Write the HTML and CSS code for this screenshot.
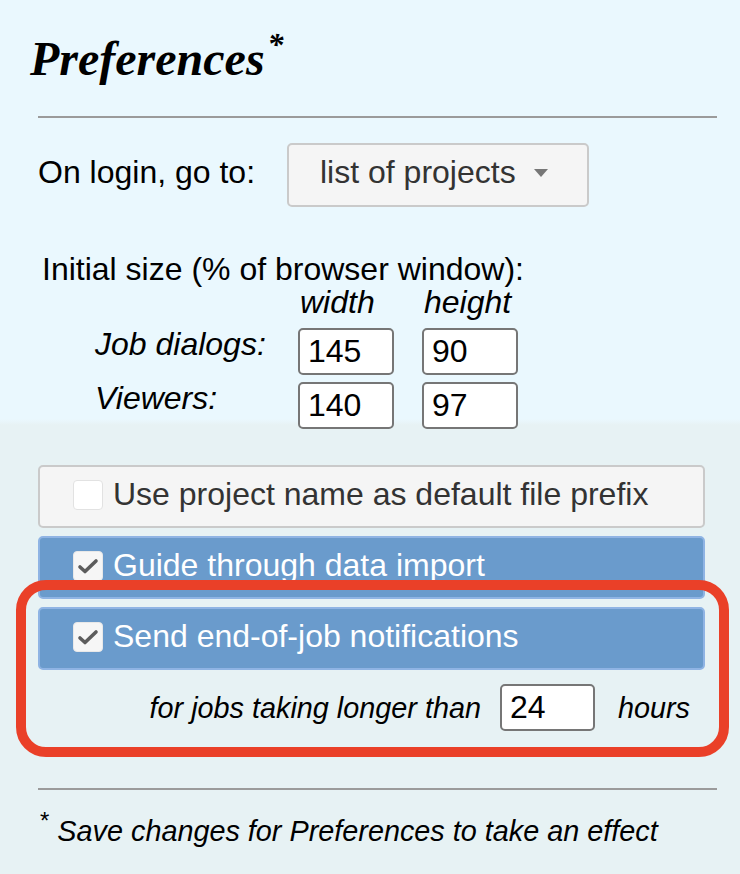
FILE: index.html
```html
<!DOCTYPE html>
<html lang="en">
<head>
<meta charset="utf-8">
<title>Preferences</title>
<link rel="stylesheet" href="styles.css">
</head>
<body>
<div class="page">
  <h1 class="title">Preferences<sup class="title-star">*</sup></h1>
  <hr class="rule">

  <div class="login-row">
    <span class="login-label">On login, go to:</span>
    <div class="select">list of projects<span class="caret"></span></div>
  </div>

  <div class="size-title">Initial size (% of browser window):</div>
  <div class="size-grid">
    <span></span>
    <span class="colhead">width</span>
    <span class="colhead">height</span>

    <span class="rowlabel">Job dialogs:</span>
    <span class="field">145</span>
    <span class="field">90</span>

    <span class="rowlabel">Viewers:</span>
    <span class="field">140</span>
    <span class="field">97</span>
  </div>

  <div class="opts">
    <div class="opt opt-off">
      <span class="box"></span>
      <span class="opt-text">Use project name as default file prefix</span>
    </div>
    <div class="opt opt-on">
      <span class="box"><svg viewBox="0 0 30 30" width="30" height="30"><path d="M7 16 L12 20.5 L23 10" fill="none" stroke="#5c5c5c" stroke-width="3.6" stroke-linecap="round" stroke-linejoin="round"/></svg></span>
      <span class="opt-text">Guide through data import</span>
    </div>
    <div class="highlight">
      <div class="opt opt-on">
        <span class="box"><svg viewBox="0 0 30 30" width="30" height="30"><path d="M7 16 L12 20.5 L23 10" fill="none" stroke="#5c5c5c" stroke-width="3.6" stroke-linecap="round" stroke-linejoin="round"/></svg></span>
        <span class="opt-text">Send end-of-job notifications</span>
      </div>
      <div class="notify-row">
        <span class="notify-label">for jobs taking longer than</span>
        <span class="field field-hours">24</span>
        <span class="notify-unit">hours</span>
      </div>
    </div>
  </div>

  <hr class="rule rule-bottom">
  <p class="note"><sup class="note-star">*</sup> Save changes for Preferences to take an effect</p>
</div>
</body>
</html>
```

FILE: styles.css
```css
html, body {
  margin: 0;
  padding: 0;
}

body {
  width: 740px;
  min-height: 874px;
  background: linear-gradient(to bottom, #eaf8fe 0, #eaf8fe 419px, #e7f2f4 425px, #e7f2f4 100%);
  font-family: "Liberation Sans", Arial, sans-serif;
  font-size: 32px;
  color: #000;
}

.page {
  padding: 0 23px 0 38px;
  overflow: hidden;
}

.title {
  margin: 31px 0 0 -8px;
  font-family: "Liberation Serif", "Times New Roman", serif;
  font-weight: bold;
  font-style: italic;
  font-size: 48px;
  line-height: 56px;
}

.title-star {
  font-size: 32px;
  line-height: 0;
  vertical-align: 20px;
  margin-left: 3px;
}

.rule {
  margin: 29px 0 0;
  border: 0;
  border-top: 2px solid #9b9b9b;
  height: 0;
}

.login-row {
  display: flex;
  align-items: baseline;
  margin-top: 25px;
}

.login-label {
  flex: none;
  width: 249px;
  line-height: 37px;
}

.select {
  box-sizing: border-box;
  width: 302px;
  height: 64px;
  padding: 7px 0 13px 31px;
  line-height: 40px;
  background: #f5f5f5;
  border: 2px solid #cacaca;
  border-radius: 5px;
  color: #333;
}

.caret {
  display: inline-block;
  width: 0;
  height: 0;
  margin-left: 18px;
  border-left: 7px solid transparent;
  border-right: 7px solid transparent;
  border-top: 8px solid #777;
  vertical-align: 6px;
}

.size-title {
  margin-top: 47px;
  padding-left: 4px;
  line-height: 31px;
}

.size-grid {
  display: grid;
  grid-template-columns: 175px 96px 96px;
  column-gap: 28px;
  row-gap: 7px;
  margin-left: 57px;
}

.colhead {
  font-style: italic;
  line-height: 32px;
  margin-top: 1px;
  margin-bottom: 3px;
  padding-left: 2px;
}

.colhead:last-child {
  padding-left: 0;
}

.rowlabel {
  font-style: italic;
  line-height: 32px;
  align-self: start;
}

.field {
  display: block;
  box-sizing: border-box;
  height: 47px;
  padding: 0 8px;
  line-height: 43px;
  background: #fff;
  border: 2px solid #767676;
  border-radius: 5px;
  font-style: normal;
  font-size: 32px;
  color: #000;
}

.opts {
  display: flex;
  flex-direction: column;
  gap: 8px;
  width: 667px;
  margin-top: 36px;
}

.opt {
  box-sizing: border-box;
  display: flex;
  align-items: center;
  height: 63px;
  padding: 0 0 4px 33px;
  border-radius: 5px;
  line-height: 37px;
}

.opt-off {
  background: #f5f5f5;
  border: 2px solid #cacaca;
  color: #333;
}

.opt-on {
  background: #6a9bcc;
  border: 2px solid #8fb4e4;
  color: #fff;
}

.box {
  flex: none;
  box-sizing: border-box;
  width: 30px;
  height: 30px;
  margin-right: 10px;
  border-radius: 4px;
  background: #fff;
  border: 1px solid #e2e2e2;
}

.opt-on .box {
  background: #f6f6f6;
  border-color: #e8e8e8;
}

.box svg {
  display: block;
  margin: -1px;
}

.highlight {
  position: relative;
}

.highlight::after {
  content: "";
  position: absolute;
  top: -27px;
  left: -22px;
  right: -24px;
  bottom: -26px;
  border: 10px solid #ea4028;
  border-radius: 30px;
  pointer-events: none;
}

.notify-row {
  display: flex;
  justify-content: flex-end;
  align-items: baseline;
  margin-top: 14px;
  padding-right: 15px;
  font-style: italic;
  font-size: 28.8px;
}

.notify-label {
  margin-right: 19px;
}

.field-hours {
  width: 95px;
  padding-left: 8px;
}

.notify-unit {
  margin-left: 23px;
}

.rule-bottom {
  margin-top: 57px;
}

.note {
  margin: 25px 0 0;
  padding-left: 2px;
  font-style: italic;
  font-size: 28.8px;
  line-height: 33px;
}

.note-star {
  font-style: normal;
  font-size: 24px;
  line-height: 0;
  vertical-align: 12px;
}
```
